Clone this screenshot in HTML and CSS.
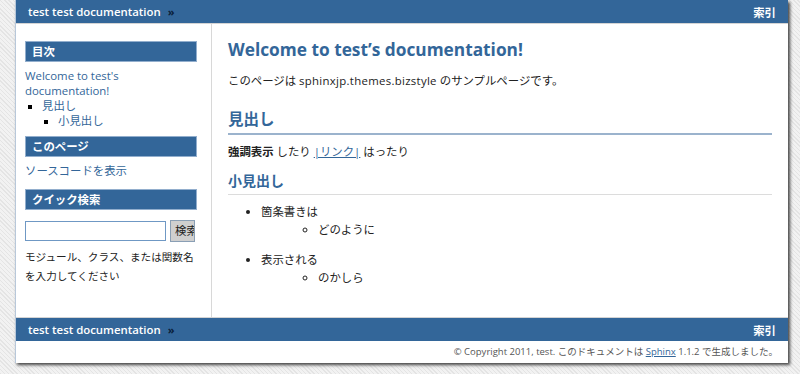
FILE: index.html
```html
<!DOCTYPE html>
<html lang="ja">
<head>
<meta charset="utf-8">
<title>Welcome to test's documentation!</title>
<link rel="stylesheet" href="styles.css">
</head>
<body>
<div class="page">
  <div class="related top">
    <span class="crumb">test test documentation <span class="raquo">»</span></span>
    <span class="index">索引</span>
  </div>
  <div class="document">
    <div class="sidebar">
      <h3 class="side-h">目次</h3>
      <a class="toc-root" href="#">Welcome to test's documentation!</a>
      <ul class="toc">
        <li><a href="#">見出し</a>
          <ul class="toc">
            <li><a href="#">小見出し</a></li>
          </ul>
        </li>
      </ul>
      <h3 class="side-h">このページ</h3>
      <a class="side-link" href="#">ソースコードを表示</a>
      <h3 class="side-h">クイック検索</h3>
      <form class="search">
        <input class="search-input" type="text">
        <span class="search-btn">検索</span>
      </form>
      <p class="search-note">モジュール、クラス、または関数名を入力してください</p>
    </div>
    <div class="body">
      <h1 class="title">Welcome to test’s documentation!</h1>
      <p class="para">このページは <span class="latin">sphinxjp.themes.bizstyle</span> のサンプルページです。</p>
      <h2 class="h2">見出し</h2>
      <p class="para"><strong>強調表示</strong> したり <a class="link" href="#">|リンク|</a> はったり</p>
      <h3 class="h3">小見出し</h3>
      <ul class="list">
        <li>箇条書きは
          <ul class="sublist"><li>どのように</li></ul>
        </li>
        <li>表示される
          <ul class="sublist"><li>のかしら</li></ul>
        </li>
      </ul>
    </div>
  </div>
  <div class="related bottom">
    <span class="crumb">test test documentation <span class="raquo">»</span></span>
    <span class="index">索引</span>
  </div>
  <div class="footer">© Copyright 2011, test. このドキュメントは <a class="flink" href="#">Sphinx</a> 1.1.2 で生成しました。</div>
</div>
</body>
</html>
```

FILE: styles.css
```css
html, body {
  margin: 0;
  padding: 0;
}
body {
  font-family: "Open Sans", "Noto Sans CJK JP", sans-serif;
  font-size: 11.4px;
  color: #222;
  background-color: #ececec;
  background-image: repeating-linear-gradient(45deg, #e4e4e4 0, #e4e4e4 1px, #f2f2f2 1px, #f2f2f2 3px);
  height: 374px;
  overflow: hidden;
}
.page {
  margin-left: 15px;
  width: 773px;
  background: #fff;
  border-left: 1px solid #b8c8da;
  box-sizing: border-box;
  box-shadow: 2px 2px 3px #444;
}
.related {
  height: 23px;
  background: #336699;
  color: #fff;
  display: flex;
  justify-content: space-between;
  align-items: center;
  padding: 0 12px 0 12px;
  font-weight: 600;
  font-size: 11.4px;
}
.related.top { border-bottom: 1px solid #d4d4d4; }
.related.bottom { border-top: 1px solid #d4d4d4; }
.raquo { color: #0a1e3a; margin-left: 4px; font-size: 11px; font-weight: 700; }
.index { font-weight: 600; }
.document {
  display: flex;
  height: 293px;
}
.sidebar {
  width: 196px;
  box-sizing: border-box;
  border-right: 1px solid #d8d8d8;
  padding: 17px 14px 0 9px;
}
.side-h {
  margin: 0;
  background: #336699;
  border: 1px solid #92aecd;
  color: #fff;
  font-size: 11.4px;
  font-weight: bold;
  height: 19px;
  line-height: 19px;
  padding-left: 6px;
}
.sidebar a { color: #336699; text-decoration: none; }
.toc-root {
  display: block;
  margin-top: 6px;
  line-height: 15px;
}
.toc {
  list-style: square;
  margin: 0;
  padding-left: 17px;
  line-height: 15px;
}
.toc .toc { padding-left: 16px; }
.toc li::marker { color: #000; font-size: 10px; }
.toc + .side-h { margin-top: 8px; }
.side-link { display: block; margin: 6px 0 11px; line-height: 15px; }
.search {
  display: flex;
  margin-top: 10px;
  gap: 4px;
  align-items: center;
}
.search-input {
  width: 141px;
  height: 20px;
  box-sizing: border-box;
  border: 1px solid #6f98c4;
  margin: 0;
  padding: 0;
}
.search-btn {
  width: 25px;
  height: 22px;
  box-sizing: border-box;
  background: #cfcfcf;
  border: 1px solid #8a9fb5;
  overflow: hidden;
  white-space: nowrap;
  font-size: 11.4px;
  line-height: 20px;
  padding-left: 4px;
  color: #222;
}
.search-note {
  margin: 6px 0 0;
  font-size: 10.6px;
  line-height: 19px;
}
.body {
  flex: 1;
  padding: 13px 16px 0 16px;
}
.title {
  margin: 0;
  color: #336699;
  font-size: 17.3px;
  font-weight: bold;
  line-height: 26px;
}
.para {
  margin: 9px 0 0;
  line-height: 18px;
}
.latin { letter-spacing: 0.3px; }
.h2 {
  margin: 18px 0 0;
  color: #336699;
  font-size: 15.5px;
  font-weight: bold;
  line-height: 22px;
  padding-bottom: 3px;
  border-bottom: 2px solid #9bb3cd;
}
.h2 + .para { margin-top: 8px; }
.link { color: #336699; }
.h3 {
  margin: 10px 0 0;
  color: #336699;
  font-size: 14px;
  font-weight: bold;
  line-height: 20px;
  padding-bottom: 3px;
  border-bottom: 1px solid #dcdcdc;
}
.list {
  margin: 8px 0 0;
  padding-left: 33px;
  list-style: disc;
  line-height: 18px;
}
.list > li + li { margin-top: 12px; }
.sublist {
  list-style: circle;
  margin: 0;
  padding-left: 57px;
}
.footer {
  height: 22px;
  line-height: 22px;
  text-align: right;
  padding-right: 10px;
  font-size: 9.5px;
  color: #555;
}
.flink { color: #336699; }
```
